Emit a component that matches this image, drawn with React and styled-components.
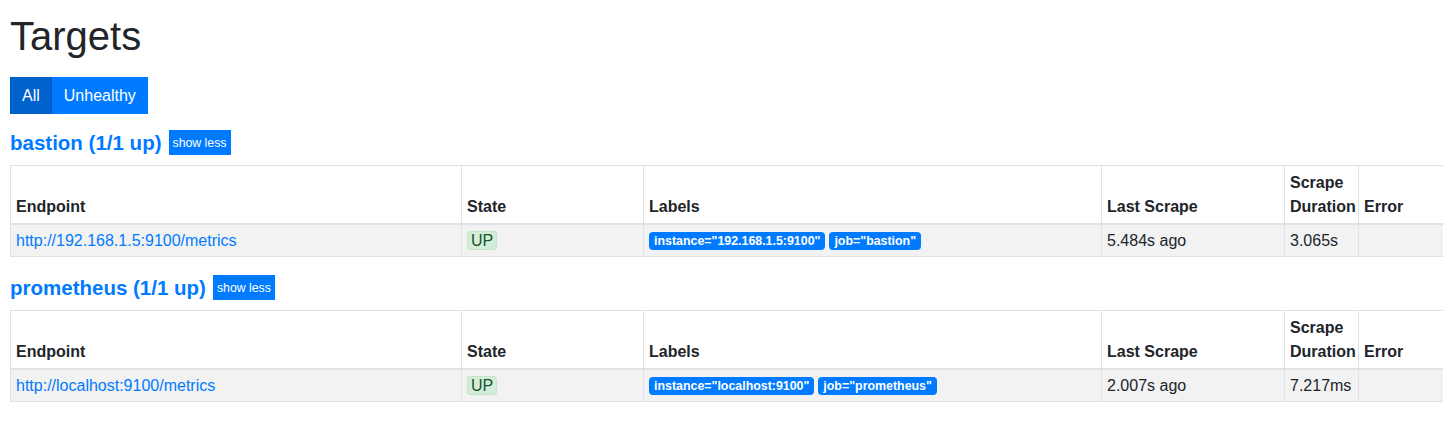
import React from "react";
import styled, { createGlobalStyle } from "styled-components";

const GlobalStyle = createGlobalStyle`
  html, body {
    margin: 0;
    padding: 0;
    background: #fff;
    overflow-x: hidden;
  }
  body {
    font-family: "Liberation Sans", Arial, sans-serif;
    font-size: 16px;
    color: #212529;
  }
`;

const Page = styled.div`
  padding: 12px 10px 20px 10px;
`;

const Title = styled.h1`
  margin: 0 0 17px 0;
  font-size: 40px;
  font-weight: 500;
  line-height: 48px;
  color: #212529;
`;

const ButtonGroup = styled.div`
  display: inline-flex;
`;

const FilterButton = styled.button`
  height: 37px;
  padding: 0 11px;
  font-family: inherit;
  font-size: 16px;
  line-height: 24px;
  color: #fff;
  background: ${(p) => (p.active ? "#0062cc" : "#007bff")};
  border: 1px solid ${(p) => (p.active ? "#005cbf" : "#007bff")};
  border-radius: 0;
  cursor: pointer;
`;

const PoolHeader = styled.div`
  display: flex;
  align-items: center;
  height: 25px;
  margin: ${(p) => (p.first ? "16px" : "0")} 0 10px 0;
`;

const PoolTitle = styled.a`
  font-size: 20.5px;
  font-weight: 700;
  color: #007bff;
  text-decoration: none;
  line-height: 24px;
`;

const ToggleButton = styled.button`
  margin-left: 7px;
  height: 25px;
  padding: 0 4px;
  font-family: inherit;
  font-size: 12.3px;
  color: #fff;
  background: #007bff;
  border: none;
  border-radius: 0;
`;

const Table = styled.table`
  table-layout: fixed;
  width: 1820px;
  border-collapse: collapse;
  margin-bottom: 18px;
  border: 1px solid #dee2e6;
`;

const Th = styled.th`
  padding: 4.5px 5px;
  text-align: left;
  vertical-align: bottom;
  font-weight: 700;
  line-height: 24px;
  border: 1px solid #dee2e6;
  border-bottom: 2px solid #dee2e6;
`;

const Row = styled.tr`
  background: #f2f2f2;
`;

const Td = styled.td`
  padding: 3.5px 5px;
  line-height: 24px;
  border: 1px solid #dee2e6;
  vertical-align: top;
`;

const EndpointLink = styled.a`
  color: #007bff;
  text-decoration: none;
`;

const StateBadge = styled.span`
  display: inline-block;
  padding: 0 3px;
  line-height: 17px;
  color: #155724;
  background: #d4edda;
  border: 1px solid #c3e6cb;
  border-radius: 3px;
`;

const Labels = styled.div`
  display: flex;
  gap: 4px;
  padding-top: 3px;
`;

const LabelBadge = styled.span`
  display: inline-block;
  padding: 3px 5px;
  font-size: 12.4px;
  font-weight: 700;
  line-height: 12px;
  color: #fff;
  background: #007bff;
  border-radius: 4px;
  white-space: nowrap;
`;

const pools = [
  {
    job: "bastion",
    endpoint: "http://192.168.1.5:9100/metrics",
    instance: "192.168.1.5:9100",
    lastScrape: "5.484s ago",
    duration: "3.065s",
  },
  {
    job: "prometheus",
    endpoint: "http://localhost:9100/metrics",
    instance: "localhost:9100",
    lastScrape: "2.007s ago",
    duration: "7.217ms",
  },
];

const widths = [451, 182, 458, 183, 74, 472];

function ScrapePool({ pool, first }) {
  return (
    <>
      <PoolHeader first={first}>
        <PoolTitle href={`#${pool.job}`}>{pool.job} (1/1 up)</PoolTitle>
        <ToggleButton>show less</ToggleButton>
      </PoolHeader>
      <Table>
        <colgroup>
          {widths.map((w, i) => (
            <col key={i} style={{ width: w }} />
          ))}
        </colgroup>
        <thead>
          <tr>
            <Th>Endpoint</Th>
            <Th>State</Th>
            <Th>Labels</Th>
            <Th>Last Scrape</Th>
            <Th>Scrape Duration</Th>
            <Th>Error</Th>
          </tr>
        </thead>
        <tbody>
          <Row>
            <Td>
              <EndpointLink href={pool.endpoint}>{pool.endpoint}</EndpointLink>
            </Td>
            <Td>
              <StateBadge>UP</StateBadge>
            </Td>
            <Td>
              <Labels>
                <LabelBadge>instance="{pool.instance}"</LabelBadge>
                <LabelBadge>job="{pool.job}"</LabelBadge>
              </Labels>
            </Td>
            <Td>{pool.lastScrape}</Td>
            <Td>{pool.duration}</Td>
            <Td />
          </Row>
        </tbody>
      </Table>
    </>
  );
}

export default function App() {
  return (
    <Page>
      <GlobalStyle />
      <Title>Targets</Title>
      <ButtonGroup>
        <FilterButton active>All</FilterButton>
        <FilterButton>Unhealthy</FilterButton>
      </ButtonGroup>
      {pools.map((p, i) => (
        <ScrapePool key={p.job} pool={p} first={i === 0} />
      ))}
    </Page>
  );
}
